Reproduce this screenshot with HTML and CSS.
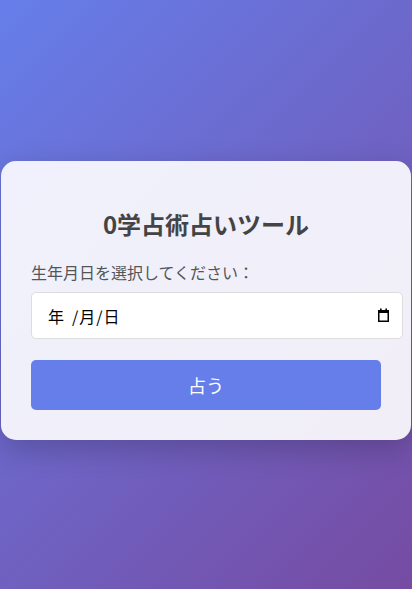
FILE: index.html
```html
<!DOCTYPE html>
<html lang="ja">
<head>
<meta charset="UTF-8">
<title>0学占術占いツール</title>
<link rel="stylesheet" href="styles.css">
</head>
<body>
<div class="card">
  <h1 class="title">0学占術占いツール</h1>
  <label class="label">生年月日を選択してください：</label>
  <div class="date" role="textbox" aria-label="生年月日">
    <span class="date-text"><span class="seg seg-y">年</span><span class="sep">/</span><span class="seg">月</span><span class="sep">/</span><span class="seg">日</span></span>
    <svg class="cal" width="13" height="14" viewBox="0 0 13 14" aria-hidden="true">
      <rect x="1.75" y="2.75" width="9.5" height="10.5" fill="none" stroke="#000" stroke-width="1.5"/>
      <rect x="1" y="2" width="11" height="3" fill="#000"/>
      <rect x="3" y="0.5" width="1.6" height="2" fill="#000"/>
      <rect x="8.4" y="0.5" width="1.6" height="2" fill="#000"/>
    </svg>
  </div>
  <button class="btn" type="button">占う</button>
</div>
</body>
</html>
```
FILE: styles.css
```css
html, body {
  margin: 0;
  height: 100%;
}
body {
  font-family: "Noto Sans CJK JP", "Noto Sans", sans-serif;
  background: linear-gradient(135deg, #667eea 0%, #764ba2 100%);
  display: flex;
  justify-content: center;
  align-items: center;
  padding-top: 12px;
  box-sizing: border-box;
}
.card {
  width: 410px;
  box-sizing: border-box;
  padding: 30px;
  background: rgba(255, 255, 255, 0.9);
  border-radius: 15px;
  box-shadow: 0 10px 30px rgba(0, 0, 0, 0.2);
}
.title {
  margin: 17px 0 20px;
  text-align: center;
  font-size: 24px;
  font-weight: bold;
  color: #444;
  line-height: 1.3;
}
.label {
  display: block;
  color: #555;
  font-size: 16px;
  margin-bottom: 8px;
}
.date {
  display: flex;
  align-items: center;
  width: calc(100% + 22px);
  height: 47px;
  box-sizing: border-box;
  padding: 0 12px 0 10px;
  font-size: 16px;
  color: #000;
  border: 1px solid #ddd;
  border-radius: 5px;
  background: #fff;
  margin-bottom: 21px;
}
.date-text {
  display: flex;
  margin-left: 6px;
  padding-top: 1px;
}
.seg-y {
  margin-right: 7px;
}
.sep {
  margin: 0 1px;
}
.cal {
  margin-left: auto;
  display: block;
}
.btn {
  display: block;
  width: 100%;
  padding: 12px;
  font-size: 18px;
  font-family: inherit;
  color: #fff;
  background: #667eea;
  border: none;
  border-radius: 5px;
}
```
